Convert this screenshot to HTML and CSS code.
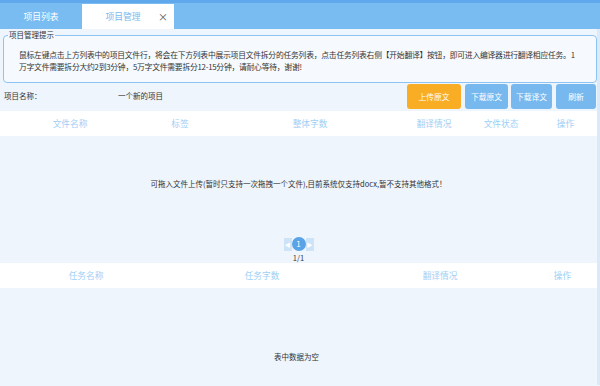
FILE: index.html
```html
<!DOCTYPE html>
<html lang="zh-CN">
<head>
    <meta charset="UTF-8">
    <title>项目管理</title>
    <link rel="stylesheet" href="styles.css">
</head>
<body>

    <div class="tabs">
        <div class="tab">项目列表</div>
        <div class="tab tab-active">项目管理<span class="tab-close">×</span></div>
    </div>

    <div class="page">

        <fieldset class="tips">
            <legend>项目管理提示</legend>
            <p>鼠标左键点击上方列表中的项目文件行，将会在下方列表中展示项目文件拆分的任务列表，点击任务列表右侧【开始翻译】按钮，即可进入编译器进行翻译相应任务。1万字文件需要拆分大约2到3分钟，5万字文件需要拆分12-15分钟，请耐心等待，谢谢!</p>
        </fieldset>

        <div class="toolbar">
            <span class="lbl">项目名称：</span>
            <span class="proj-name">一个新的项目</span>
            <div class="btns">
                <button class="btn btn-orange">上传原文</button>
                <button class="btn btn-w43">下载原文</button>
                <button class="btn">下载译文</button>
                <button class="btn btn-w40">刷新</button>
            </div>
        </div>

        <div class="thead thead-files">
            <span>文件名称</span>
            <span>标签</span>
            <span>整体字数</span>
            <span>翻译情况</span>
            <span>文件状态</span>
            <span>操作</span>
        </div>
        <div class="tbody tbody-files">
            <p class="empty-msg">可拖入文件上传(暂时只支持一次拖拽一个文件),目前系统仅支持docx,暂不支持其他格式！</p>
        </div>

        <div class="pager">
            <div class="pager-row">
                <span class="pg-arrow">&#9664;</span>
                <span class="pg-num">1</span>
                <span class="pg-arrow">&#9654;</span>
            </div>
            <div class="pg-count">1/1</div>
        </div>

        <div class="thead thead-tasks">
            <span>任务名称</span>
            <span>任务字数</span>
            <span>翻译情况</span>
            <span>操作</span>
        </div>
        <div class="tbody tbody-tasks">
            <p class="empty-msg">表中数据为空</p>
        </div>

    </div>

</body>
</html>
```

FILE: styles.css
```css
body{
    margin: 0;
    width: 600px;
    height: 386px;
    overflow: hidden;
    background-color: #eef5fd;
    font-family: "Noto Sans CJK SC", "DejaVu Sans", sans-serif;
    font-size: 7.5px;
    color: #333;
}

.tabs{
    display: flex;
    height: 25px;
    padding-top: 4px;
    background: linear-gradient(#5fa8ec 0, #5fa8ec 3px, #79bcf2 3px);
}

.tab{
    width: 82px;
    text-align: center;
    line-height: 25px;
    font-size: 8.8px;
    color: #fff;
}

.tab-active{
    width: 92px;
    padding-right: 10px;
    box-sizing: border-box;
    background-color: #fff;
    color: #7ab8ee;
    position: relative;
}

.tab-close{
    position: absolute;
    right: 6px;
    top: 0;
    color: #555;
    font-size: 10px;
}

.page{
    border-right: 3px solid #dce9f8;
}

.tips{
    margin: 0 0 0 3px;
    padding: 8px 14px 9px 15px;
    border: 1px solid #8cc3f2;
    border-radius: 4px;
    background-color: #f6faff;
}

.tips legend{
    padding: 0 1px;
    margin-left: -11px;
    line-height: 12px;
    font-size: 7.5px;
    color: #333;
}

.tips p{
    margin: 0;
    line-height: 12px;
    font-size: 7.8px;
    letter-spacing: -0.24px;
}

.toolbar{
    display: flex;
    align-items: flex-start;
    height: 28px;
    padding-left: 4px;
}

.lbl,
.proj-name{
    line-height: 26px;
}

.lbl{
    width: 114px;
}

.btns{
    margin-left: auto;
    margin-top: 1px;
    display: flex;
}

.btn{
    border: none;
    border-radius: 3px;
    height: 25px;
    padding: 0;
    width: 41px;
    margin-left: 3px;
    background-color: #77b8ef;
    color: #fff;
    font-family: inherit;
    font-size: 7.8px;
}

.btn-orange{
    width: 54px;
    margin-left: 0;
    margin-right: 1px;
    background-color: #f9ad25;
}

.btn-w43{
    width: 43px;
}

.btn-w40{
    width: 40px;
    margin-left: 4px;
    margin-right: 1px;
}

.thead{
    display: grid;
    height: 25px;
    align-items: center;
    background-color: #fff;
    color: #a0d0f6;
    font-size: 8.7px;
    text-align: center;
}

.thead-files{
    grid-template-columns: 140px 80px 180px 68px 66px 63px;
}

.thead-tasks{
    grid-template-columns: 172px 180px 176px 69px;
}

.tbody{
    display: flex;
    justify-content: center;
    align-items: center;
}

.tbody-files{
    height: 96px;
}

.tbody-tasks{
    align-items: flex-start;
    height: 34px;
    padding-top: 63px;
}

.empty-msg{
    margin: 0;
    font-size: 7.5px;
    line-height: 12px;
}

.tbody-tasks .empty-msg{
    margin-left: -4px;
}

.pager{
    height: 31px;
    text-align: center;
}

.pager-row{
    display: flex;
    justify-content: center;
    align-items: center;
    height: 14px;
    padding-top: 5px;
}

.pg-arrow{
    display: inline-block;
    width: 8px;
    height: 13px;
    line-height: 13px;
    background-color: #cde3f8;
    color: #fff;
    font-size: 6px;
}

.pg-num{
    width: 14px;
    height: 14px;
    line-height: 14px;
    border-radius: 50%;
    background-color: #5aa3e6;
    color: #fff;
    font-size: 8px;
}

.pg-count{
    margin-top: 2px;
    font-size: 7.5px;
    line-height: 10px;
}
```
